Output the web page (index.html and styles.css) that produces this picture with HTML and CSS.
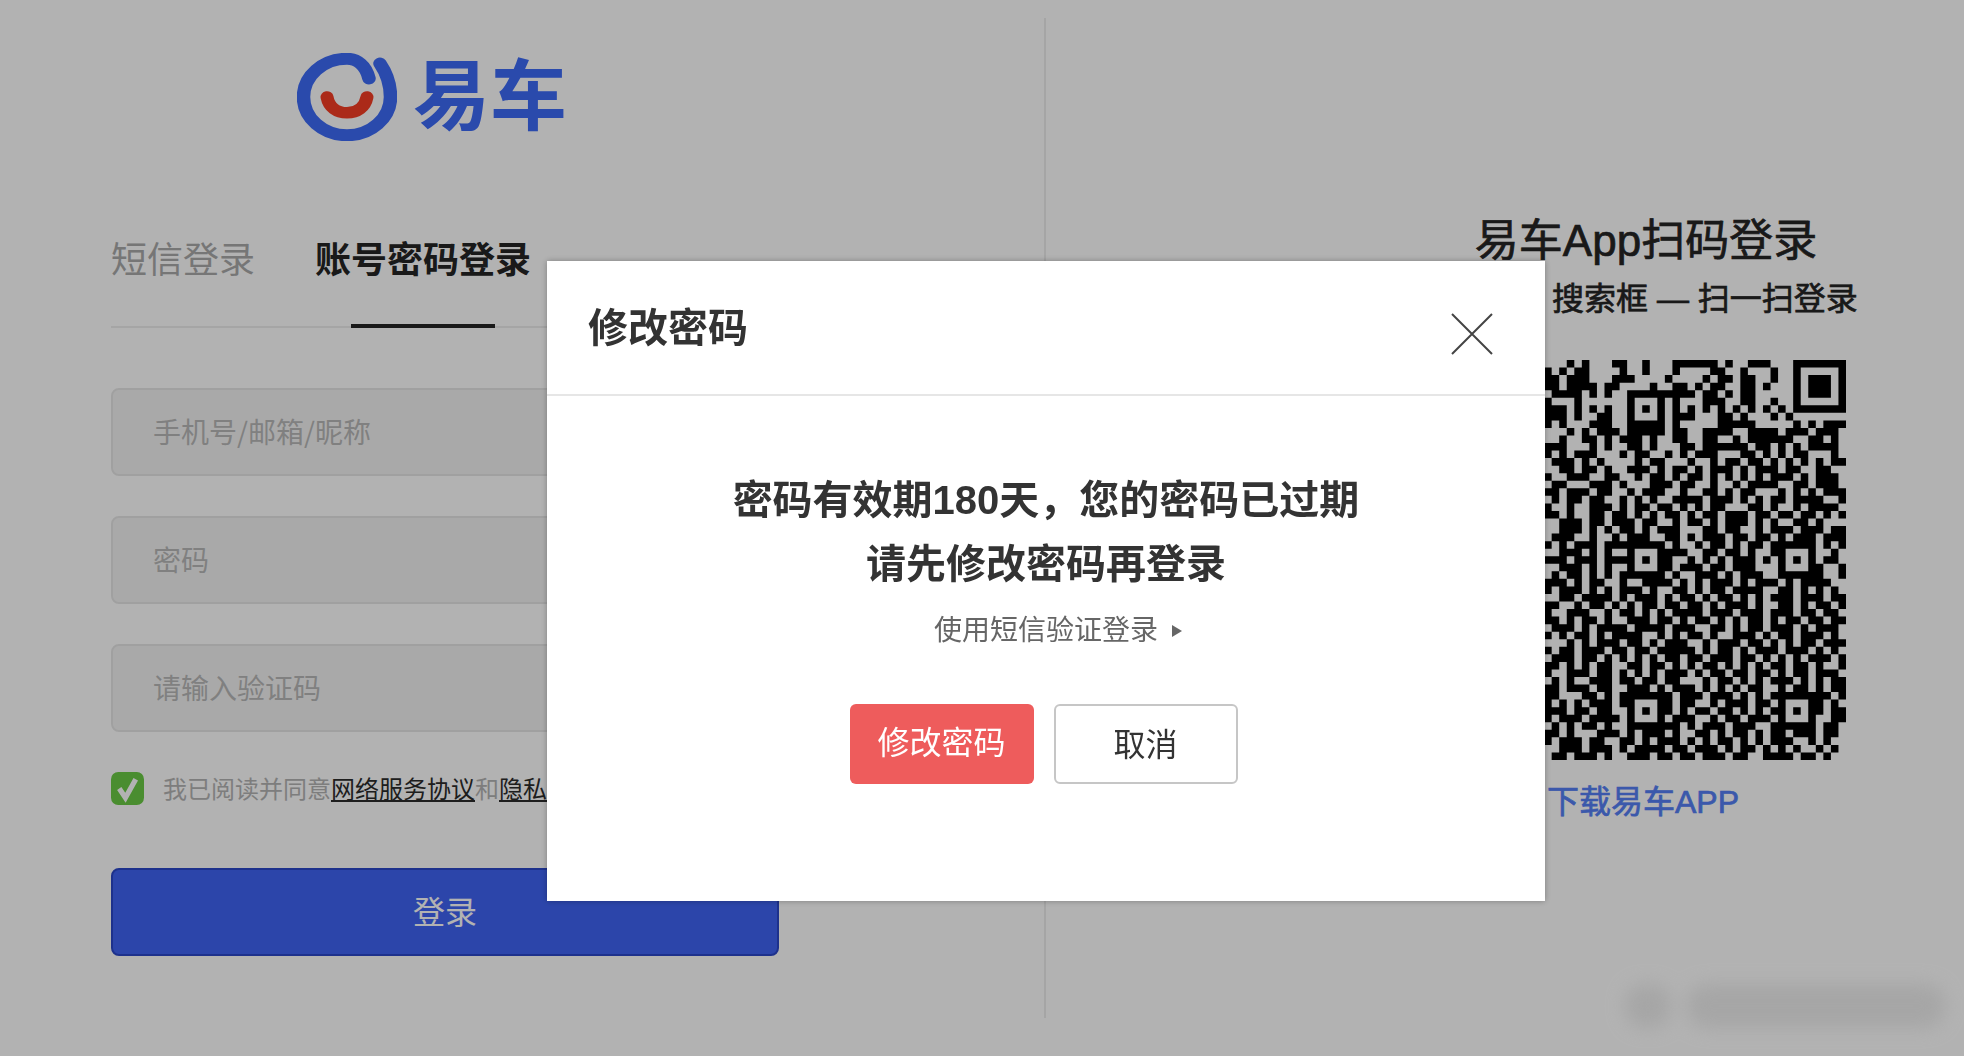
FILE: index.html
```html
<!DOCTYPE html>
<html lang="zh-CN">
<head>
<meta charset="utf-8">
<title>易车登录</title>
<link rel="stylesheet" href="styles.css">
</head>
<body>
<div class="page">
  <section class="login">
    <div class="logo">
      <svg class="logo-mark" viewBox="0 0 100 100" preserveAspectRatio="none" aria-hidden="true">
        <path class="ring" d="M72 29C69 14 60 6.500 50 6.500A43.500 43.500 0 1 0 93.500 50C93.500 35 89 22 83 12"/>
        <path class="smile" d="M30 50C32 62 40 68 50 68S68 62 70 50"/>
      </svg>
      <span class="logo-text">易车</span>
    </div>
    <div class="tabs">
      <span class="tab">短信登录</span>
      <span class="tab tab-active">账号密码登录</span>
    </div>
    <form class="form">
      <input class="field" type="text" placeholder="手机号/邮箱/昵称">
      <input class="field" type="text" placeholder="密码">
      <input class="field" type="text" placeholder="请输入验证码">
      <div class="agree">
        <svg class="check" viewBox="0 0 32 32" aria-hidden="true">
          <rect width="32" height="32" rx="7"/>
          <path d="M8 16l6 9L24 7"/>
        </svg>
        <span>我已阅读并同意<a class="agree-link">网络服务协议</a>和<a class="agree-link">隐私政策</a></span>
      </div>
      <button class="submit" type="button">登录</button>
    </form>
  </section>
  <div class="divider"></div>
  <section class="scan">
    <h2 class="scan-title">易车App扫码登录</h2>
    <p class="scan-sub">打开App 搜索框 — 扫一扫登录</p>
    <svg class="qr" id="qr" viewBox="0 0 53 53" aria-hidden="true"><path id="qr-path"/></svg>
    <a class="download">下载易车APP</a>
  </section>
</div>
<div class="overlay"></div>
<div class="smudge"><i class="blob blob-a"></i><i class="blob blob-b"></i></div>
<div class="modal">
  <header class="modal-head">
    <h1 class="modal-title">修改密码</h1>
    <svg class="close" viewBox="0 0 42 42" aria-hidden="true"><path d="M1 1l40 40M41 1L1 41"/></svg>
  </header>
  <div class="modal-body">
    <p class="message">密码有效期180天，您的密码已过期<br>请先修改密码再登录</p>
    <a class="sms">使用短信验证登录</a>
    <div class="actions">
      <button class="btn btn-primary" type="button">修改密码</button>
      <button class="btn btn-ghost" type="button">取消</button>
    </div>
  </div>
</div>
<script src="qr.js"></script>
</body>
</html>
```
FILE: styles.css
```css
* { box-sizing: border-box; }
html, body { margin: 0; height: 100%; overflow: hidden; }
body {
  background: #fff;
  font-family: "Liberation Sans", "Noto Sans CJK SC", sans-serif;
  color: #252525;
}
.page { display: flex; width: 1964px; height: 1056px; }

.login { width: 1044px; flex: none; padding-left: 111px; }
.logo { display: flex; align-items: center; height: 88px; margin: 53px 0 0 186px; }
.logo-mark { width: 100px; height: 88px; flex: none; }
.ring { fill: none; stroke: #3d6bf7; stroke-width: 13.500; stroke-linecap: round; }
.smile { fill: none; stroke: #f53d24; stroke-width: 13; stroke-linecap: round; }
.logo-text {
  margin-left: 16px;
  font-size: 77px;
  line-height: 88px;
  font-weight: 700;
  color: #3d6bf7;
}
.tabs {
  display: flex;
  gap: 60px;
  width: 668px;
  margin-top: 94px;
  padding-bottom: 39px;
  border-bottom: 2px solid #ececec;
}
.tab { position: relative; font-size: 36px; line-height: 52px; color: #aaa; }
.tab-active { font-weight: 700; color: #252525; }
.tab-active::after {
  content: "";
  position: absolute;
  left: 36px;
  bottom: -41px;
  width: 144px;
  height: 4px;
  background: #252525;
}
.form { display: flex; flex-direction: column; width: 668px; margin-top: 60px; }
.field {
  height: 88px;
  margin-bottom: 40px;
  padding: 0 0 3px 40px;
  border: 2px solid #e6e6e6;
  border-radius: 8px;
  background: #f3f3f3;
  font: 28px "Noto Sans CJK SC", sans-serif;
}
.field::placeholder { color: #b8b8b8; opacity: 1; }
.agree { display: flex; align-items: center; gap: 19px; height: 32px; font-size: 24px; color: #b4b4b4; white-space: nowrap; }
.agree span { margin-top: -2px; }
.check { width: 33px; height: 33px; flex: none; }
.check rect { fill: #6acb45; }
.check path { fill: none; stroke: #fff; stroke-width: 5; }
.agree-link { color: #2b2b2b; text-decoration: underline; }
.submit {
  height: 88px;
  margin-top: 64px;
  padding-bottom: 6px;
  border: 2px solid #2a47c9;
  border-radius: 8px;
  background: #3f64f4;
  color: #fff;
  font: 32px "Liberation Sans", "Noto Sans CJK SC", sans-serif;
}

.divider { width: 2px; height: 1000px; margin-top: 18px; flex: none; background: #ededed; }

.scan {
  display: flex;
  flex-direction: column;
  align-items: center;
  width: 490px;
  margin-left: 355px;
  padding-top: 211px;
}
.scan-title { margin: 0; font-size: 44px; line-height: 60px; font-weight: 400; white-space: nowrap; -webkit-text-stroke: .7px currentColor; }
.scan-sub { margin: 0; padding-right: 12px; font-size: 32px; line-height: 56px; font-weight: 400; white-space: nowrap; -webkit-text-stroke: .7px currentColor; }
.qr { display: block; width: 400px; height: 400px; margin-top: 33px; flex: none; }
.download { margin-top: 20px; padding-right: 6px; font-size: 32px; line-height: 44px; color: #557ff5; -webkit-text-stroke: .7px currentColor; }

.overlay { position: fixed; inset: 0; background: rgba(0, 0, 0, .3); }
.smudge { position: fixed; left: 1625px; top: 984px; display: flex; gap: 16px; filter: blur(9px); }
.blob { display: block; height: 44px; background: #a6a6a6; border-radius: 20px; }
.blob-a { width: 46px; }
.blob-b { width: 258px; }

.modal {
  position: fixed;
  left: 547px;
  top: 261px;
  width: 998px;
  height: 640px;
  background: #fff;
  box-shadow: 0 0 6px rgba(0, 0, 0, .3);
  color: #333;
}
.modal-head {
  display: flex;
  justify-content: space-between;
  align-items: center;
  height: 135px;
  padding: 0 52px 0 41px;
  border-bottom: 2px solid #e6e6e6;
}
.modal-title { margin: 0; font-size: 40px; line-height: 56px; font-weight: 700; }
.close { width: 42px; height: 42px; margin-top: 12px; }
.close path { fill: none; stroke: #444; stroke-width: 2; }
.modal-body { display: flex; flex-direction: column; align-items: center; padding-top: 72px; }
.message { margin: 0; font-size: 40px; line-height: 64px; font-weight: 700; text-align: center; }
.sms { position: relative; margin-top: 15px; font-size: 28px; line-height: 40px; color: #666; }
.sms::after {
  content: "";
  position: absolute;
  left: 238px;
  top: 14px;
  border-left: 10px solid #666;
  border-top: 6px solid transparent;
  border-bottom: 6px solid transparent;
}
.actions { display: flex; gap: 20px; margin: 53px 5px 0 0; }
.btn {
  width: 184px;
  height: 80px;
  padding-bottom: 6px;
  border-radius: 6px;
  font: 32px "Liberation Sans", "Noto Sans CJK SC", sans-serif;
}
.btn-primary { border: 0; padding-bottom: 10px; background: #ee5c5c; color: #fff; }
.btn-ghost { border: 2px solid #c6c6c6; background: #fff; color: #333; }
```
FILE: qr.js
```js
// Visible part of the code: columns 13-52 of a 53-module symbol.
var ROWS = [
  "...#.#...# #..#...### ###.#..### ...#######",
  "#.#.##.... #..#...#.. ..##..#... #..#.....#",
  "##.###...# ##....#... .#.##.##.. #..#.###.#",
  "##.####.## ....#..##. #.##..##.# ...#.###.#",
  ".####.#.#. ..###.#### .##.#.##.. ...#.###.#",
  "#...#..... .#####.#.. .###..##.. #..#.....#",
  "###.#.#.#. .#...#.#.# .#.#.#.#.# .#.#######",
  "###.#..##. .#.#.#.### ...##.#... #.#.......",
  "#.#...###. .#...#.#.. ...#####.. ...#.#.###",
  "...#.#.### .#####.##. .####..### #.###.###.",
  "..#..##.#. ###.#..##. .##..#.### ###..##.#.",
  "###...#.#. .##.#...## .######.## .#.#.####.",
  "#.#.###... #.##..#.#. ###...##.# .#.##...#.",
  ".###.#.#.. ..#.##...# ..#.##.##. #.#.#.#.##",
  "..##.##.#. .###.#.##. #.###.#.## #.##..##..",
  "#..###..## ..#.##.#.# #.#.#.#.#. ###.#.###.",
  ".##...###. #...###.## ..#..#.### #..##.###.",
  "##.###.##. .#.###..#. .##.#.##.. .#.#.#.###",
  ".#.##.##.. #.#.#..### #.###.#.#. ##.####..#",
  "#..#..###. #.##.##.#. #.##...##. #..#.####.",
  "##.#..##.# #.#.#.##.# .##.###.## .##.##.#.#",
  "..###.##.# ##.##..#.# #.#.###.#. #..##.#...",
  "..###.#.#. ##.#.###.. .##.##..#. ###.###.##",
  ".###..#..# .###..##.# .###.##.## .#.###.###",
  "#.#.###.## ###.#..#.. #.##.#.##. ##.#.#.#.#",
  "..###.#.#. .##.#.###. .##.##.#.. ##.###..#.",
  "###.###.## #.#.###..# .#.#.###.# .#.###.##.",
  "..###.#.#. .####.#.## #.##.###.. .###.##..#",
  ".#.##.#.#. ##.###.#.. ###.#.###. .###.##..#",
  "###.#.##.. #..####.#. #.###.#.## #.#.####..",
  "#.###.#.#. ###.#..##. #.##.####. .##.#.#.#.",
  "..##.####. #.###.#.## .#.##.#.#. ###.###.##",
  "##..#.##.# .#.##.##.# #.#.###.#. .##.#.##.#",
  "#..###..#. ##.#.#.### #.###.###. ###.##.##.",
  "##.#.##.#. .###.##.#. ##.#.#.##. #.##.##.##",
  ".###.#.### #.####.### ..##.#.##. ###.#.###.",
  "#.#.##.#.# ###..#.#.# #.#..###.# .##.###.#.",
  "...#.#.### .##.#.###. .#.###.##. #.#.##.###",
  "#.##.###.# #.##.##### .#.##.#.## #.###.#.#.",
  ".###.##.#. #.#.#.##.# #.###.##.# .#.#.###.#",
  "##.#.#.##. .##.##.#.# .##.#.#.#. ##.##.#..#",
  "#..###.##. #.#.#.###. #.##.##.## .#.##.###.",
  ".#.#..###. ##.##.##.. .#.##.#.#. ###.#.#.##",
  "##.###.##. .###.#.### .#.#.#.##. .#.##.#.##",
  "##...##.#. ###..##.## #.###.#.#. ##.#.###.#",
  "#.#.#.###. #.###.#.## ..#.###.## .##.###.#.",
  "###.##.##. .###.##.#. ##.##.#.#. #.#.###.##",
  "#.###.#### .#.#.#.### ..#.##.### .###.#..##",
  ".#.#.##.#. .#.##.##.# .###.###.. ##.###.##.",
  "##.#...### .#.###.#.. ##.#.##.# .##.###.##",
  "#.###.##.. ##.#.###.# .#.##.#.#. ###..#.#..",
  "..###.###. #.####.##. ###.#.##.# .#.#..#.#.",
  ".##.###.#. .###.##.## .###.##..# ###.##.#.."
];

var cells = ROWS.map(function (row) {
  return row.replace(/ /g, "").split("").map(function (c) { return c === "#"; });
});

function paint(col, row, size, ringed) {
  for (var y = 0; y < size; y++) {
    for (var x = 0; x < size; x++) {
      var d = Math.max(Math.abs(x - (size - 1) / 2), Math.abs(y - (size - 1) / 2));
      if (cells[row + y]) cells[row + y][col + x] = ringed(d);
    }
  }
}
function finder(d) { return d !== 2; }
function align(d) { return d !== 1; }

paint(33, 0, 7, finder);
[[13, 6], [13, 26], [33, 26], [13, 46], [33, 46]].forEach(function (p) {
  paint(p[0] - 2, p[1] - 2, 5, align);
});

var d = "";
cells.forEach(function (row, y) {
  var x = 0;
  while (x < 40) {
    if (row[x]) {
      var start = x;
      while (x < 40 && row[x]) x++;
      d += "M" + (start + 13) + " " + y + "h" + (x - start) + "v1h-" + (x - start) + "z";
    } else {
      x++;
    }
  }
});
document.getElementById("qr-path").setAttribute("d", d);
```
